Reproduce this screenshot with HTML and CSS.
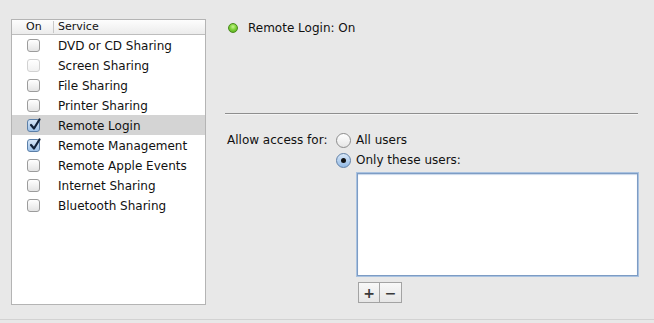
FILE: index.html
```html
<!DOCTYPE html>
<html lang="en">
<head>
    <meta charset="UTF-8">
    <title>Sharing</title>
    <link rel="stylesheet" href="styles.css">
</head>
<body>

<div class="pane">
    <div class="services">
        <div class="services-head">
            <div class="col-on">On</div>
            <div class="col-name">Service</div>
        </div>
        <ul class="service-list">
            <li><span class="check"></span><span class="name">DVD or CD Sharing</span></li>
            <li><span class="check disabled"></span><span class="name">Screen Sharing</span></li>
            <li><span class="check"></span><span class="name">File Sharing</span></li>
            <li><span class="check"></span><span class="name">Printer Sharing</span></li>
            <li class="selected"><span class="check on"><svg viewBox="0 0 14 14"><path d="M3 7 L6 10.5 L11.5 1.5" /></svg></span><span class="name">Remote Login</span></li>
            <li><span class="check on"><svg viewBox="0 0 14 14"><path d="M3 7 L6 10.5 L11.5 1.5" /></svg></span><span class="name">Remote Management</span></li>
            <li><span class="check"></span><span class="name">Remote Apple Events</span></li>
            <li><span class="check"></span><span class="name">Internet Sharing</span></li>
            <li><span class="check"></span><span class="name">Bluetooth Sharing</span></li>
        </ul>
    </div>

    <div class="detail">
        <div class="status">
            <span class="led"></span>
            <span>Remote Login: On</span>
        </div>

        <div class="divider"></div>

        <div class="access">
            <div class="access-label">Allow access for:</div>
            <div class="choices">
                <label class="radio-row"><span class="radio"></span>All users</label>
                <label class="radio-row"><span class="radio picked"></span>Only these users:</label>
                <div class="user-box"></div>
                <div class="add-remove">
                    <button>+</button><button>&minus;</button>
                </div>
            </div>
        </div>
    </div>
</div>

</body>
</html>
```

FILE: styles.css
```css
body {
    margin: 0;
    background-color: #e8e8e8;
    font-family: "DejaVu Sans", "Liberation Sans", sans-serif;
    font-size: 12px;
    color: #111;
}
.pane {
    display: flex;
    height: 300px;
    padding: 19px 0 0 11px;
    border-bottom: 1px solid #d2d2d2;
    box-shadow: 0 1px 0 #f2f2f2;
}
.services {
    width: 193px;
    height: 284px;
    background-color: #fff;
    border: 1px solid #b4b4b4;
}
.services-head {
    display: flex;
    height: 14px;
    line-height: 14px;
    font-size: 11px;
    border-bottom: 1px solid #bdbdbd;
    background: linear-gradient(#fdfdfd, #ececec);
}
.col-on {
    width: 42px;
    padding-left: 14px;
    box-sizing: border-box;
    border-right: 1px solid #c8c8c8;
    height: 12px;
    line-height: 12px;
    margin-top: 1px;
}
.col-name {
    padding-left: 4px;
}
.service-list {
    list-style: none;
    margin: 0;
    padding: 0;
}
.service-list li {
    display: flex;
    align-items: center;
    height: 20px;
}
.service-list li.selected {
    background-color: #d4d4d4;
}
.service-list .name {
    padding-top: 1px;
}
.check {
    width: 13px;
    height: 13px;
    margin-left: 15px;
    margin-right: 18px;
    box-sizing: border-box;
    border: 1px solid #9c9c9c;
    border-radius: 3px;
    background: linear-gradient(#ffffff, #e4e4e4);
    position: relative;
}
.check.disabled {
    border-color: #d2d2d2;
    background: linear-gradient(#ffffff, #f1f1f1);
}
.check.on {
    border-color: #5b7fa8;
    background: linear-gradient(#d6e6f7, #9fc2e8);
}
.check svg {
    position: absolute;
    left: 0;
    top: -2px;
    width: 14px;
    height: 14px;
    overflow: visible;
}
.check svg path {
    fill: none;
    stroke: #13233a;
    stroke-width: 2.2;
    stroke-linecap: round;
    stroke-linejoin: round;
}

.detail {
    display: flex;
    flex-direction: column;
    margin-left: 19px;
    width: 413px;
}
.status {
    display: flex;
    align-items: center;
    height: 16px;
    margin-top: 1px;
}
.led {
    width: 10px;
    height: 10px;
    margin-left: 3px;
    margin-right: 10px;
    border-radius: 50%;
    box-sizing: border-box;
    border: 1px solid #4a8a1c;
    background: radial-gradient(circle at 50% 35%, #c8f58e 0, #7fd23a 45%, #4fa318 100%);
}
.divider {
    margin-top: 77px;
    border-top: 1px solid #8e8e8e;
    box-shadow: 0 1px 0 #f4f4f4;
}
.access {
    display: flex;
    margin-top: 16px;
}
.access-label {
    width: 113px;
    padding-left: 2px;
    box-sizing: border-box;
    line-height: 20px;
}
.choices {
    display: flex;
    flex-direction: column;
}
.radio-row {
    display: flex;
    align-items: center;
    height: 20px;
}
.radio {
    width: 15px;
    height: 15px;
    margin-right: 5px;
    box-sizing: border-box;
    border: 1px solid #8c8c8c;
    border-radius: 50%;
    background: linear-gradient(#ffffff, #e6e6e6);
    display: flex;
    align-items: center;
    justify-content: center;
}
.radio.picked {
    border-color: #5f7fa6;
    background: linear-gradient(#d8e7f7, #94bbe6);
}
.radio.picked::after {
    content: "";
    width: 5px;
    height: 5px;
    border-radius: 50%;
    background-color: #111;
}
.user-box {
    width: 281px;
    height: 103px;
    margin-top: 3px;
    margin-left: 21px;
    box-sizing: border-box;
    background-color: #fff;
    border: 1px solid #7d9cc4;
    box-shadow: 0 0 0 1px #a9c2e0, inset 0 1px 1px #c7d6ea;
}
.add-remove {
    display: flex;
    margin-top: 6px;
    margin-left: 22px;
}
.add-remove button {
    width: 22px;
    height: 21px;
    padding: 0;
    border: 1px solid #a3a3a3;
    background: linear-gradient(#f8f8f8, #e6e6e6);
    font-family: "DejaVu Sans", sans-serif;
    font-size: 14px;
    font-weight: bold;
    line-height: 16px;
    color: #3a3a3a;
}
.add-remove button + button {
    border-left: none;
}
```
